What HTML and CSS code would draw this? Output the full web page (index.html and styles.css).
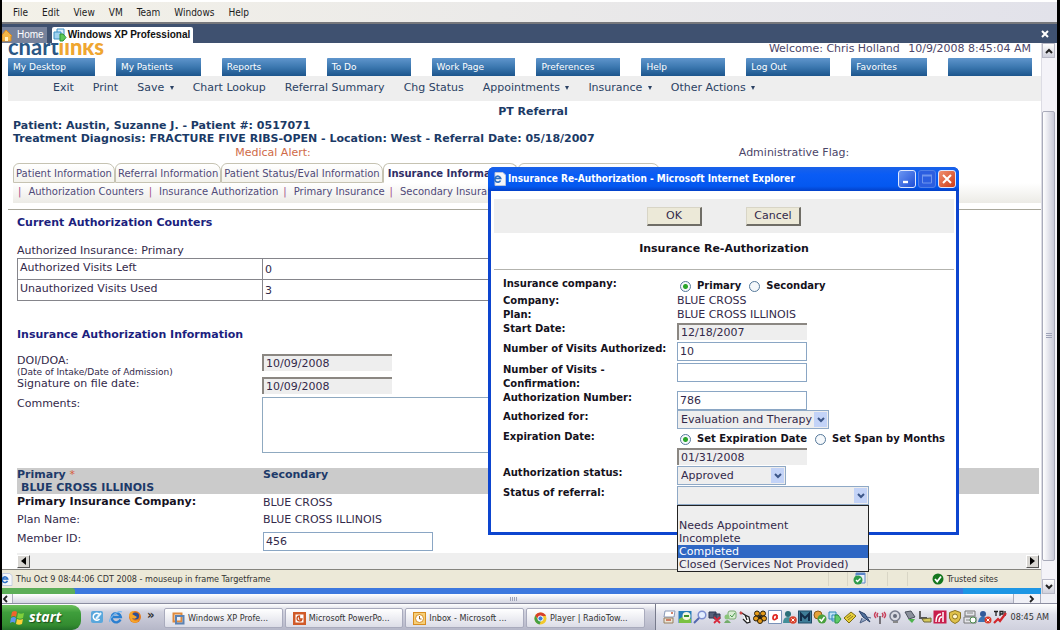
FILE: index.html
```html
<!DOCTYPE html>
<html lang="en">
<head>
<meta charset="utf-8">
<title>Insurance Re-Authorization</title>
<link rel="stylesheet" href="styles.css">
</head>
<body>
<svg class="defs" width="0" height="0" aria-hidden="true">
  <defs>
    <symbol id="chev" viewBox="0 0 8 6"><path d="M1 1l3 3 3-3" fill="none" stroke="currentColor" stroke-width="2"/></symbol>
    <symbol id="ie" viewBox="0 0 14 14"><path d="M11.5 9.5A4.6 4.6 0 1 1 11.8 7H4" fill="none" stroke="#2b7fd0" stroke-width="2.4"/><path d="M1 12C-1 9 8 0 13 2" fill="none" stroke="#79b7ee" stroke-width="1.3"/></symbol>
    <symbol id="iepage" viewBox="0 0 14 14"><path d="M3 .5h8l2.500 2.500V13.500H3z" fill="#f5f6fa" stroke="#b9c4dc"/><path d="M8.500 8.500A3 3 0 1 1 8.700 6.500H3" fill="none" stroke="#2b6fc4" stroke-width="1.700"/></symbol>
  </defs>
</svg>

<header class="menubar">
  <nav class="menus"><a href="#">File</a><a href="#">Edit</a><a href="#">View</a><a href="#">VM</a><a href="#">Team</a><a href="#">Windows</a><a href="#">Help</a></nav>
</header>

<div class="vmtabs">
  <button class="vmtab home"><svg width="11" height="13" viewBox="0 0 11 13"><path d="M0 6l4-5 6 6H9v5H0z" fill="#f2b648" stroke="#d98a20"/><path d="M3 12V8h3v4" fill="#fff3c8"/></svg>Home</button>
  <button class="vmtab current"><svg width="14" height="14" viewBox="0 0 14 14"><path d="M4 1h7v7H4z" fill="#d8ecfa" stroke="#3c8fc4"/><path d="M1 4h7v7H1z" fill="#9fd2f0" stroke="#3c8fc4"/><path d="M7 6h3l3 3.500L10 13H7z" fill="#5ec95a" stroke="#2b9434"/></svg>Windows XP Professional</button>
  <button class="vmclose" aria-label="Close"><svg width="8" height="8" viewBox="0 0 8 8"><path d="M1 1l6 6M7 1L1 7" stroke="#fff" stroke-width="2"/></svg></button>
</div>

<main class="screen">
  <div class="browser">
    <div class="brandrow"><div class="brand">chart<b>links</b></div><div class="welcome">Welcome: Chris Holland <span>10/9/2008 8:45:04 AM</span></div></div>
    <nav class="mainnav">
      <a href="#">My Desktop</a><a href="#">My Patients</a><a href="#">Reports</a><a href="#">To Do</a><a href="#">Work Page</a><a href="#">Preferences</a><a href="#">Help</a><a href="#">Log Out</a><a href="#">Favorites</a><a href="#" aria-label="Blank"></a>
    </nav>
    <nav class="toolbar">
      <a href="#">Exit</a><a href="#">Print</a><a href="#">Save <i></i></a><a href="#">Chart Lookup</a><a href="#">Referral Summary</a><a href="#">Chg Status</a><a href="#">Appointments <i></i></a><a href="#">Insurance <i></i></a><a href="#">Other Actions <i></i></a>
    </nav>
    <section class="patient">
      <h1>PT Referral</h1>
      <p>Patient: Austin, Suzanne J. - Patient #: 0517071</p>
      <p>Treatment Diagnosis: FRACTURE FIVE RIBS-OPEN - Location: West - Referral Date: 05/18/2007</p>
      <div class="alerts"><span class="medical">Medical Alert:</span><span>Administrative Flag:</span></div>
    </section>
    <nav class="tabs">
      <a href="#">Patient Information</a><a href="#">Referral Information</a><a href="#">Patient Status/Eval Information</a><a href="#" class="on">Insurance Information</a><a href="#" class="blank" aria-label="More"></a>
    </nav>
    <nav class="subtabs">
      <a href="#">Authorization Counters</a><a href="#">Insurance Authorization</a><a href="#">Primary Insurance</a><a href="#">Secondary Insurance</a>
    </nav>
    <div class="pane">
      <h2>Current Authorization Counters</h2>
      <p class="lead">Authorized Insurance: Primary</p>
      <table class="counters">
        <tr><th scope="row">Authorized Visits Left</th><td>0</td></tr>
        <tr><th scope="row">Unauthorized Visits Used</th><td>3</td></tr>
      </table>
      <h2 class="second">Insurance Authorization Information</h2>
      <form class="info">
        <label for="doi">DOI/DOA:<small>(Date of Intake/Date of Admission)</small></label><input id="doi" class="sunken" value="10/09/2008" readonly>
        <label for="sig">Signature on file date:</label><input id="sig" class="sunken" value="10/09/2008" readonly>
        <label for="com">Comments:</label><textarea id="com"></textarea>
      </form>
      <div class="band"><div>Primary <em>*</em><br><span>BLUE CROSS ILLINOIS</span></div><div>Secondary</div></div>
      <form class="plan">
        <b>Primary Insurance Company:</b><span>BLUE CROSS</span>
        <span>Plan Name:</span><span>BLUE CROSS ILLINOIS</span>
        <label for="mem">Member ID:</label><input id="mem" class="box" value="456">
      </form>
    </div>
    <div class="hscroll"><button aria-label="Scroll left"><svg width="5" height="8" viewBox="0 0 5 8"><path d="M5 0v8L0 4z"/></svg></button><button aria-label="Scroll right"><svg width="5" height="8" viewBox="0 0 5 8"><path d="M0 0v8l5-4z"/></svg></button></div>
    <footer class="status">
      <svg width="11" height="13" viewBox="3 0 11 14"><use href="#iepage" width="14" height="14"/></svg><span class="msg">Thu Oct 9 08:44:06 CDT 2008 - mouseup in frame Targetframe</span>
      <span class="cell"></span>
      <span class="cell"><svg width="13" height="13" viewBox="0 0 13 13"><path d="M3 1h9v10H3z" fill="#e8effa" stroke="#5c86c8"/><path d="M3 1h9v2H3z" fill="#5c86c8"/><circle cx="5" cy="8" r="4.500" fill="#2f9c4a"/><path d="M3 8l1.500 1.500L7.500 6.500" fill="none" stroke="#fff" stroke-width="1.400"/></svg></span>
      <span class="cell"></span><span class="cell"></span><span class="cell"></span>
      <span class="zone"><svg width="12" height="12" viewBox="0 0 12 12"><circle cx="6" cy="6" r="5.500" fill="#14761e"/><path d="M3 6l2.200 2.500L9 3.500" fill="none" stroke="#fff" stroke-width="1.800"/></svg>Trusted sites</span>
    </footer>
    <div class="xpstrip"><i></i><b></b><u></u></div>
  </div>

  <div class="vscroll">
    <button aria-label="Scroll up"><svg class="up" width="8" height="6"><use href="#chev"/></svg></button>
    <div class="thumb"><i></i></div>
    <button aria-label="Scroll down"><svg width="8" height="6"><use href="#chev"/></svg></button>
  </div>

  <section class="dialog" role="dialog" aria-labelledby="dlgname">
    <header class="titlebar">
      <svg width="14" height="14"><use href="#iepage"/></svg>
      <span id="dlgname">Insurance Re-Authorization - Microsoft Internet Explorer</span>
      <button class="win" aria-label="Minimize"><svg width="10" height="10" viewBox="0 0 10 10"><path d="M1 8h5" stroke="#fff" stroke-width="2.400"/></svg></button>
      <button class="win dim" aria-label="Maximize"><svg width="10" height="10" viewBox="0 0 10 10"><path d="M.5 1.500h9v7.500h-9z" fill="none" stroke="#6f95ee"/><path d="M0 1.500h10" stroke="#6f95ee" stroke-width="2"/></svg></button>
      <button class="win close" aria-label="Close"><svg width="10" height="10" viewBox="0 0 10 10"><path d="M1 1l8 8M9 1L1 9" stroke="#fff" stroke-width="2"/></svg></button>
    </header>
    <div class="dlgbody">
      <div class="actions"><button>OK</button><button>Cancel</button></div>
      <h2>Insurance Re-Authorization</h2>
      <form class="fields">
        <span class="lab">Insurance company:</span>
        <div class="radios"><input type="radio" name="co" id="r1" checked><label for="r1">Primary</label><input type="radio" name="co" id="r2"><label for="r2">Secondary</label></div>
        <span class="lab">Company:</span><span>BLUE CROSS</span>
        <span class="lab">Plan:</span><span>BLUE CROSS ILLINOIS</span>
        <label class="lab" for="sd">Start Date:</label><input id="sd" class="sunken" value="12/18/2007" readonly>
        <label class="lab" for="nv">Number of Visits Authorized:</label><input id="nv" class="box" value="10">
        <label class="lab" for="nc">Number of Visits -<br>Confirmation:</label><input id="nc" class="box">
        <label class="lab" for="an">Authorization Number:</label><input id="an" class="box" value="786">
        <label class="lab" for="af">Authorized for:</label>
        <div class="pick therapy"><select id="af"><option>Evaluation and Therapy</option></select><i><svg width="8" height="6"><use href="#chev"/></svg></i></div>
        <span class="lab">Expiration Date:</span>
        <div><div class="radios"><input type="radio" name="ex" id="r3" checked><label for="r3">Set Expiration Date</label><input type="radio" name="ex" id="r4"><label for="r4">Set Span by Months</label></div><input class="sunken expiry" aria-label="Expiration date" value="01/31/2008" readonly></div>
        <label class="lab" for="as">Authorization status:</label>
        <div class="pick approved"><select id="as"><option>Approved</option></select><i><svg width="8" height="6"><use href="#chev"/></svg></i></div>
        <label class="lab" for="sr">Status of referral:</label>
        <div class="pick referral"><select id="sr"><option></option></select><i><svg width="8" height="6"><use href="#chev"/></svg></i>
          <ul class="options" role="listbox"><li role="option"></li><li role="option">Needs Appointment</li><li role="option">Incomplete</li><li role="option" aria-selected="true" class="hot">Completed</li><li role="option">Closed (Services Not Provided)</li></ul>
        </div>
      </form>
    </div>
  </section>
</main>

<div class="vmhscroll">
  <button aria-label="Left"><svg width="6" height="8" viewBox="0 0 6 8"><path d="M5 1L2 4l3 3" fill="none" stroke="#222" stroke-width="1.800"/></svg></button>
  <div class="hthumb"><i></i></div>
  <button class="right" aria-label="Right"><svg width="6" height="8" viewBox="0 0 6 8"><path d="M1 1l3 3-3 3" fill="none" stroke="#222" stroke-width="1.800"/></svg></button>
</div>

<footer class="taskbar">
  <button class="start"><svg width="15" height="15" viewBox="0 0 15 15"><path d="M2 2q3-2 5 0L6 7Q4 5 1 7z" fill="#f0642c"/><path d="M8 3q3 1.500 6 0l-1 5q-3 1.500-6 0z" fill="#7fd03c"/><path d="M1 8q3-2 5 0l-1 5q-2-2-5 0z" fill="#5a96ee"/><path d="M7 9q3 1.500 6 0l-1 5q-3 1.500-6 0z" fill="#fbd036"/></svg>start</button>
  <div class="quick">
    <svg width="14" height="14" viewBox="0 0 14 14"><rect x="1" y="1" width="12" height="12" rx="2" fill="#5aa7dc"/><path d="M9 4A3.500 3.500 0 1 0 9.500 9" fill="none" stroke="#fff" stroke-width="1.600"/><path d="M6 9l5-6" stroke="#e8f6ff" stroke-width="2"/></svg>
    <svg width="14" height="14"><use href="#ie"/></svg>
    <svg width="14" height="14" viewBox="0 0 14 14"><circle cx="7" cy="7" r="6" fill="#e57b1c"/><circle cx="7.500" cy="6" r="3.600" fill="#2c4f96"/><path d="M1 5q1-4 5-4L4 4l5 3q-2 3-5 1 1 4 7 2-3 5-8 1z" fill="#f5a62a"/></svg>
    <b>»</b>
  </div>
  <nav class="tasks">
    <button><svg width="13" height="13" viewBox="0 0 13 13"><path d="M1.500 1.500h8v8h-8z" fill="none" stroke="#e08a3c" stroke-width="2"/><path d="M4 4h7.500v7.500H4z" fill="none" stroke="#5b82b4" stroke-width="2"/></svg>Windows XP Profe...</button>
    <button><svg width="13" height="13" viewBox="0 0 13 13"><rect width="13" height="13" fill="#d05a28"/><path d="M2.500 2.500h8v8h-8z" fill="#fff"/><path d="M6.500 4A2.500 2.500 0 1 0 9 7H6.500z" fill="none" stroke="#c8501e" stroke-width="1.300"/></svg>Microsoft PowerPo...</button>
    <button><svg width="13" height="13" viewBox="0 0 13 13"><rect x=".5" y=".5" width="12" height="12" fill="#f6cf78" stroke="#d88e20"/><circle cx="6.500" cy="6.500" r="4" fill="#fff" stroke="#d88e20"/><path d="M6.500 4v3h2" fill="none" stroke="#a0661a"/></svg>Inbox - Microsoft ...</button>
    <button><svg width="13" height="13" viewBox="0 0 13 13"><circle cx="6.500" cy="6.500" r="6" fill="#f2c92e"/><path d="M1.300 3.500A6 6 0 0 1 12 4H6.500L4 7.500z" fill="#d8402c"/><path d="M1.300 3.500L4 8l3 1-1.500 3.500A6 6 0 0 1 1.300 3.500" fill="#45a044"/><circle cx="6.500" cy="6.500" r="2.600" fill="#3d7ede" stroke="#fff"/></svg>Player | RadioTow...</button>
  </nav>
  <div class="tray">
    <svg viewBox="0 0 14 14"><path d="M2 1h10l-1 6H1z" fill="#fff" stroke="#8a9ab8"/><path d="M1 8h9v5H1z" fill="#e9e3d6" stroke="#98805e"/><path d="M3 10h5M8 3h2" stroke="#c65b3c" stroke-width="1.500"/></svg>
    <svg viewBox="0 0 14 14"><rect x=".5" y="1" width="13" height="12" fill="#267cb8"/><path d="M1 9q6-5 12 0v4H1z" fill="#7ac142"/><circle cx="8.500" cy="6" r="4" fill="#f6f8e0"/><path d="M6 6h5" stroke="#3b8f2a" stroke-width="2"/></svg>
    <svg viewBox="0 0 14 14"><circle cx="9" cy="5" r="3.800" fill="#e3eeff" stroke="#7d8fd0" stroke-width="1.500"/><path d="M6 8l-5 5" stroke="#5268b0" stroke-width="2"/></svg>
    <svg viewBox="0 0 14 14"><path d="M1 2h7v6H1zM6 4h6v5H6z" fill="#55607a" stroke="#2b3450"/><path d="M6 7l6 6M12 7l-6 6" stroke="#d8273a" stroke-width="1.800"/></svg>
    <svg viewBox="0 0 14 14"><rect x="5" y="1" width="8" height="8" rx="2" fill="#d9ecd4" stroke="#79a870"/><circle cx="4" cy="7" r="2.500" fill="#8ac47a"/><path d="M1 13q3-6 7 0z" fill="#72ac6a"/><path d="M7 5l2 2 3-4" fill="none" stroke="#4d9c50"/></svg>
    <svg viewBox="0 0 14 14"><path d="M2 2l5 3 2 5M7 5l4 2 1 5-3 1-4-4" fill="#fff" stroke="#222" stroke-width="1.300"/><circle cx="3" cy="3" r="1.500" fill="#c44"/></svg>
    <svg viewBox="0 0 14 14"><g fill="#e59a19" stroke="#2b210c"><circle cx="4" cy="3.500" r="2.500"/><circle cx="10" cy="3.500" r="2.500"/><circle cx="3" cy="8.500" r="2.500"/><circle cx="11" cy="8.500" r="2.500"/><circle cx="7" cy="11" r="2.500"/></g><circle cx="7" cy="7" r="2" fill="#2b210c"/></svg>
    <svg viewBox="0 0 14 14"><path d="M.5.5h13v13H.5z" fill="#fff" stroke="#7992b8"/><path d="M9 5Q5 4 5 8q0 2 2 1.500T9 5v4" fill="none" stroke="#e02a22" stroke-width="1.800"/></svg>
    <svg viewBox="0 0 14 14"><circle cx="5" cy="4" r="3" fill="#2b6e78"/><path d="M0 13q0-6 5-6t6 6z" fill="#438f99"/><circle cx="10" cy="10" r="3.800" fill="#d8432e"/><path d="M8.500 8.500l3 3m0-3l-3 3" stroke="#fff"/></svg>
    <svg viewBox="0 0 14 14"><rect x=".5" y="1" width="13" height="12" fill="#3f7d98" stroke="#214c66"/><path d="M3 11V4l4 4 4-4v7" fill="none" stroke="#142d49" stroke-width="2"/></svg>
    <svg viewBox="0 0 14 14"><circle cx="5" cy="5" r="4" fill="#e5a23b" stroke="#8a5a1a"/><circle cx="9" cy="9" r="4.500" fill="#4aa13e"/><path d="M6.500 9l2 2 3-4" fill="none" stroke="#fff" stroke-width="1.500"/></svg>
    <svg viewBox="0 0 14 14"><path d="M1 2h7v7H1zM4 5h6v6H4z" fill="#bfe3f5" stroke="#2f87b8"/><path d="M7 5h3l3 4-3 4H7z" fill="#5fcb68" stroke="#2f9440"/></svg>
    <svg viewBox="0 0 14 14"><path d="M1 8l7-6 5 4-7 7z" fill="#e8cf3a" stroke="#7a6a12"/><path d="M4 8l4-3M5 10l5-4" stroke="#8a7a20"/></svg>
    <svg viewBox="0 0 14 14"><path d="M1 1l6 3 5 8-7-5z" fill="#51719c" stroke="#263d66"/><path d="M4 8l-2 5 6-3M9 7l4 1" fill="#93a6c4" stroke="#4c5f82"/></svg>
    <svg viewBox="0 0 14 14"><path d="M7 6v8" stroke="#77737a" stroke-width="2"/><path d="M3 2q-3 3 0 6M11 2q3 3 0 6M5 3q-2 2 0 4M9 3q2 2 0 4" fill="none" stroke="#c9405a" stroke-width="1.500"/></svg>
    <svg viewBox="0 0 14 14"><circle cx="7" cy="6" r="5" fill="#d8dae2" stroke="#777c8c" stroke-width="1.500"/><circle cx="7" cy="6" r="2" fill="#666b7a"/><path d="M5 12h5" stroke="#888" stroke-width="2"/></svg>
    <svg viewBox="0 0 14 14"><path d="M2 2l6-1 4 6-6 2z" fill="#8b919c" stroke="#4b515c"/><path d="M5 9h7l-3 4z" fill="#4db34c"/></svg>
    <svg viewBox="0 0 14 14"><path d="M2 1v7h7" fill="none" stroke="#555" stroke-width="1.800"/><path d="M4 9l9-1v4H6z" fill="#d6c95c" stroke="#6c6637"/></svg>
    <svg viewBox="0 0 14 14"><rect x=".5" y=".5" width="13" height="13" fill="#c81e4c"/><path d="M3 12q0-8 5-8M6 12q0-5 3-5M10 2v10" fill="none" stroke="#fff" stroke-width="1.500"/></svg>
    <svg viewBox="0 0 14 14"><path d="M7 .5l5.500 2V8q-1 4-5.500 5.500Q2.500 12 1.500 8V2.500z" fill="#dfc14a" stroke="#8c7420"/><circle cx="7" cy="6.500" r="2.500" fill="#fff7cf" stroke="#8c7420"/></svg>
    <svg viewBox="0 0 14 14"><path d="M2 1h10v5H2zM1 7h12v6H1z" fill="#e4e5ea" stroke="#777"/><path d="M4 3h6M3 10h4" stroke="#888"/><circle cx="10" cy="10" r="3" fill="#fff" stroke="#4e8b4e"/></svg>
    <svg viewBox="0 0 14 14"><circle cx="5" cy="4" r="3" fill="#335a9a"/><path d="M0 12q1-6 6-5t5 5z" fill="#3a74b4"/><circle cx="10" cy="10" r="3.500" fill="#d83b2a"/><path d="M8.500 8.500l3 3m0-3l-3 3" stroke="#fff"/></svg>
    <svg viewBox="0 0 14 14"><path d="M1 1.500h4M3 1v5M7 6V1.500h3V4H7M12 1v5" fill="none" stroke="#222" stroke-width="1.300"/><path d="M1 13l4-4 2 2 6-8" fill="none" stroke="#d2262c" stroke-width="2.200"/></svg>
    <time>08:45 AM</time>
  </div>
</footer>
</body>
</html>
```
FILE: styles.css
```css
* { box-sizing: border-box; }
html, body { height: 100%; }
body {
  margin: 0;
  min-height: 100vh;
  display: flex;
  flex-direction: column;
  border-left: 2px solid #000;
  border-right: 3px solid #000;
  background: #fff;
  color: #33294a;
  font: 11px/14px "DejaVu Sans", sans-serif;
  overflow: hidden;
}
a { color: inherit; text-decoration: none; }
h1, h2, p, ul { margin: 0; padding: 0; font-size: 11px; }
button, input, select, textarea { font: inherit; color: inherit; margin: 0; padding: 0; border: 0; border-radius: 0; }
button svg, .status svg, .quick svg, .tray svg { display: block; flex: none; }
.defs { position: absolute; }

/* virtual machine window chrome */
.menubar {
  height: 24px;
  padding: 4px 11px 0;
  border-top: 2px solid #fff;
  border-bottom: 2px solid #77787c;
  background: linear-gradient(90deg, #f3f1e8, #e2e2ea);
}
.menus { display: flex; gap: 14px; font: 10px/14px "DejaVu Sans Condensed", "DejaVu Sans", sans-serif; color: #1c1c1c; }
.vmtabs { height: 19px; display: flex; align-items: flex-end; gap: 5px; background: #3f5170; }
.vmtab { height: 16px; display: flex; align-items: center; gap: 4px; font: 10px/12px "Liberation Sans", sans-serif; }
.home { background: #77829b; color: #fff; padding-right: 3px; }
.current { background: #fff; color: #111; font-weight: bold; padding: 0 3px 0 1px; gap: 1px; border-radius: 2px 2px 0 0; }
.vmclose { margin-left: auto; align-self: center; background: none; padding: 0 8px; }

.screen { flex: 1; min-height: 0; display: flex; position: relative; }
.browser { flex: 1; min-width: 0; display: flex; flex-direction: column; }

/* chart application */
.brandrow { height: 15px; margin-left: 6px; display: flex; align-items: flex-end; justify-content: space-between; }
.brand { height: 15px; display: flex; align-items: flex-end; overflow: hidden; padding-bottom: 2px; font: bold 22px/18px Lato, sans-serif; color: #2a5785; }
.brand b { color: #efa631; }
.welcome { padding: 0 10px 3px 0; line-height: 12px; color: #4b4568; }
.welcome span { margin-left: 5px; }
.mainnav { display: grid; grid-template-columns: 87fr 85fr repeat(6, 84fr) 76fr 84fr; gap: 21px; margin: 0 9px 0 6px; color: #fff; font-size: 9px; line-height: 18px; }
.mainnav a { min-width: 0; height: 18px; padding-left: 5px; background: linear-gradient(#5f95cc, #3c78b0 50%, #1c558c); border-radius: 1px 0 0 0; }
.toolbar { display: flex; gap: 19px; height: 25px; margin-left: 6px; padding: 5px 0 0 45px; background: #eee; color: #2b4264; white-space: nowrap; }
.toolbar i { display: inline-block; margin: 0 0 1px 2px; border: 2px solid transparent; border-top: 4px solid #2b4264; border-bottom: 0; }
.patient { padding: 4px 0 0 11px; color: #1b3a66; font-weight: bold; }
.patient h1 { text-align: center; padding-left: 12px; line-height: 14px; }
.patient p { line-height: 13px; }
.alerts { display: grid; grid-template-columns: 520fr 508fr; text-align: center; font-weight: normal; padding-top: 1px; color: #4b4568; }
.alerts .medical { color: #cf6a48; }
.alerts span + span { padding-left: 14px; }
.tabs { display: flex; height: 20px; margin: 3px 0 0 11px; font-size: 10px; line-height: 19px; color: #504a78; white-space: nowrap; }
.tabs a { padding: 0 2px; border: 1px solid #c6c3b2; border-radius: 6px 8px 0 0; background: linear-gradient(#fff, #f3f2ec); }
.tabs .on { padding: 0 4px; background: #fff; border-bottom-color: #fff; color: #2f2e66; font-weight: bold; }
.tabs .blank { flex: 0 1 142px; }
.subtabs { display: flex; height: 20px; margin-left: 11px; font-size: 10px; line-height: 18px; color: #504a78; background: linear-gradient(#fff, #ecebe6); }
.subtabs a::before { content: "|"; color: #a14c87; padding: 0 7px 0 5px; }

.pane { flex: 1; min-height: 0; margin: 6px 0 0 6px; padding: 6px 2px 0 9px; border-top: 1px solid #a9a79b; }
.pane h2 { color: #1c1f7e; }
.lead { padding-top: 14px; }
.counters { width: 62%; margin-top: 0; border-collapse: collapse; }
.counters th, .counters td { height: 21px; padding: 0 2px; border: 1px solid #85858b; text-align: left; font-weight: normal; }
.counters th { width: 245px; padding-bottom: 3px; }
.counters td { padding-top: 2px; }
.pane h2.second { padding-top: 27px; }
.info { display: grid; grid-template-columns: 245px 1fr; grid-template-rows: 23px 20px 71px; padding-top: 12px; align-items: start; }
.info small { display: block; font-size: 9px; line-height: 9px; }
.info textarea { display: block; width: 400px; height: 56px; border: 1px solid #8fa9c0; background: #fff; resize: none; }
.sunken { display: block; width: 130px; height: 17px; padding: 0 2px; background: #eee; border-top: 2px solid #8b8782; border-left: 2px solid #8b8782; }
.box { display: block; width: 130px; height: 19px; padding: 0 2px; background: #fff; border: 1px solid #8aa6c4; }
.band { display: grid; grid-template-columns: 246px 1fr; background: #cbcbcb; color: #1d3a69; font-weight: bold; line-height: 13px; }
.band em { color: #d8603c; font-style: normal; font-weight: normal; }
.band span { padding-left: 4px; }
.plan { display: grid; grid-template-columns: 246px 1fr; grid-template-rows: 17px 20px 20px; padding-top: 1px; }
.plan b { color: #17131f; }
.plan span + span, .plan b + span { padding-top: 1px; }
.plan .box { width: 170px; }
.hscroll { display: flex; justify-content: space-between; align-items: center; height: 16px; margin: 0 2px 0 15px; background: #efefef; }
.hscroll button { display: grid; place-items: center; width: 13px; height: 13px; background: #d8d6d2; border: 1px solid; border-color: #fff #555 #555 #fff; }
.status { display: flex; align-items: center; height: 19px; border-top: 1px solid #85847e; background: #ece9d8; font: 9px/14px "DejaVu Sans Condensed", "DejaVu Sans", sans-serif; color: #333; }
.msg { flex: 1; padding-left: 3px; }
.cell { width: 19px; height: 14px; border-left: 1px solid #d9d6c6; }
.cell + .cell { width: 20px; padding-left: 5px; }
.zone { display: flex; align-items: center; gap: 3px; width: 114px; padding-left: 5px; }
.xpstrip { display: flex; height: 6px; background: #3d78de; }
.xpstrip i { width: 73px; background: #5cae58; border-radius: 0 3px 0 0; }
.xpstrip b { flex: 1; }
.xpstrip u { width: 78px; background: #1d96e4; }

/* silver scrollbars */
.vscroll { width: 16px; padding-right: 2px; display: flex; flex-direction: column; background: #f4f3f8; border-left: 1px solid #dcdce4; }
.vscroll button { display: grid; place-items: center; width: 13px; height: 15px; background: linear-gradient(#fff, #cfd0dc); border: 1px solid #b7b8c6; color: #222; }
.vscroll .up { transform: rotate(180deg); }
.thumb { flex: 1; margin: 53px 0 18px; display: grid; place-items: center; border: 1px solid #a9abba; border-radius: 2px; background: linear-gradient(90deg, #fff, #c9cad9); }
.thumb i { width: 6px; height: 6px; background: repeating-linear-gradient(#9fa3b8 0 1px, transparent 1px 2px); }
.vmhscroll { display: flex; height: 9px; background: #f0f0f6; }
.vmhscroll button { width: 11px; background: #f4f4f8; border-right: 1px solid #a9abba; }
.vmhscroll .right { margin-left: 15px; margin-right: 16px; width: 12px; }
.hthumb { flex: 1; display: grid; place-items: center; background: linear-gradient(#fff, #d4d5e2); border-right: 1px solid #a9abba; }
.hthumb i { width: 7px; height: 4px; background: repeating-linear-gradient(90deg, #9fa3b8 0 1px, transparent 1px 2px); }

/* re-authorization window */
.dialog { position: absolute; left: 486px; top: 124px; width: 471px; padding: 0 3px 3px; background: #0d45cf; border-radius: 6px 6px 0 0; }
.titlebar { display: flex; align-items: center; gap: 2px; height: 24px; margin: 0 -3px; padding: 0 3px 0 4px; border-radius: 6px 6px 0 0; background: linear-gradient(#1a62e8, #0a5cf5 30%, #0458f0 80%, #0340c8); color: #fff; font: bold 10px/14px "DejaVu Sans Condensed", "DejaVu Sans", sans-serif; }
.titlebar span { flex: 1; }
.win { display: grid; place-items: center; width: 18px; height: 18px; border: 1px solid #dfe8ff; border-radius: 3px; background: linear-gradient(135deg, #6b95f2, #1e4ed6); }
.win.dim { border-color: #4f7fe8; background: #2c5ee0; }
.win.close { background: linear-gradient(135deg, #f09070, #cf3c18); }
.dlgbody { min-height: 341px; padding: 8px 2px 0 3px; background: #fff; }
.actions { display: flex; justify-content: center; gap: 44px; padding: 8px 0; height: 34px; background: #eee; }
.actions button { width: 55px; height: 19px; background: #ece9d8; border: 1px solid; border-color: #d8d5c6 #6f6d66 #6f6d66 #d8d5c6; border-right-width: 2px; border-bottom-width: 2px; }
.dialog h2 { padding: 9px 0 13px; text-align: center; color: #15121c; border-bottom: 1px solid #b3b3ae; }
.fields { display: grid; grid-template-columns: 174px 1fr; grid-template-rows: 17px 14px 14px 20px 21px 28px 19px 20px 36px 20px 19px; padding: 7px 0 0 9px; align-items: start; white-space: nowrap; }
.lab { color: #15121c; font-size: 10px; font-weight: bold; }
.fields .sunken { margin-top: 1px; }
.radios { display: flex; align-items: center; height: 17px; padding-top: 1px; color: #15121c; font-size: 10px; font-weight: bold; }
.radios input { appearance: none; flex: none; width: 11px; height: 11px; margin: 0 6px 0 3px; border: 1px solid #55789a; border-radius: 50%; background: #f5f8fb; }
.radios input:checked { background: radial-gradient(circle, #2ba52b 0 2px, #f5f8fb 3px); }
.radios label + input { margin-left: 8px; }
.pick { position: relative; height: 19px; border: 1px solid #8fa9c6; background: #eee; }
.pick select { appearance: none; display: block; width: 100%; height: 17px; padding: 0 3px; background: none; }
.pick > i { position: absolute; top: 1px; right: 1px; width: 13px; height: 15px; display: grid; place-items: center; background: #c3d3f7; color: #3c5688; pointer-events: none; }
.therapy { width: 152px; }
.approved { width: 109px; }
.referral { width: 192px; }
.options { position: absolute; left: -1px; right: -1px; top: 18px; list-style: none; background: #eee; border: 1px solid #222; line-height: 13px; z-index: 2; }
.options li { height: 13px; padding-left: 1px; }
.options .hot { background: #2f67c4; color: #fff; }

/* windows taskbar */
.taskbar { display: flex; align-items: center; height: 27px; border-top: 1px solid #8b8da0; background: linear-gradient(#fff, #d0d1de 30%, #b5b7c8); font: 9px/14px "DejaVu Sans Condensed", "DejaVu Sans", sans-serif; color: #333; }
.start { display: flex; align-items: center; gap: 4px; width: 79px; height: 25px; padding-left: 8px; border-radius: 0 9px 9px 0; background: linear-gradient(#6cc05c, #3f9e3c 30%, #338c30 80%, #24702a); color: #fff; font: italic bold 14px/18px "Open Sans", sans-serif; text-shadow: 1px 1px 1px #1c4f1c; }
.quick { display: flex; align-items: center; gap: 5px; width: 76px; padding-left: 9px; }
.quick b { align-self: flex-start; font-size: 13px; line-height: 10px; }
.tasks { flex: 1; display: flex; gap: 2px; padding: 2px 10px 0 7px; }
.tasks button { flex: 1; min-width: 0; height: 20px; display: flex; align-items: center; gap: 3px; padding-left: 7px; overflow: hidden; white-space: nowrap; border: 1px solid #a9abbd; border-radius: 2px; background: linear-gradient(#fff, #dcdde7); }
.tray { display: flex; align-items: center; gap: 1px; padding: 0 8px 0 7px; height: 26px; border-left: 1px solid #777a8c; background: linear-gradient(#fff, #dfe0ea 40%, #cfd0dd); }
.tray svg { width: 14px; height: 14px; }
.tray time { padding-left: 3px; white-space: nowrap; }
```
